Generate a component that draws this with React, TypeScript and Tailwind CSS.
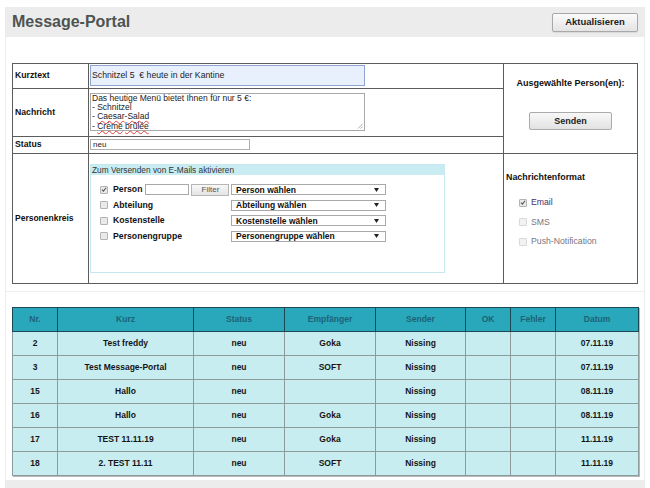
import React from "react";

function Box({ checked, faded }: { checked?: boolean; faded?: boolean }) {
  return (
    <span
      className={
        faded
          ? "inline-flex w-[8px] h-[8px] shrink-0 border border-[#d8d8d8] bg-[#f2f2f2] rounded-[1px] items-center justify-center"
          : "inline-flex w-[8px] h-[8px] shrink-0 border border-[#b4b4b4] bg-[#e9e9e9] rounded-[1px] items-center justify-center"
      }
    >
      {checked && (
        <svg width="7" height="7" viewBox="0 0 8 8">
          <path d="M1.3 4.3 L3.2 6.2 L6.8 1.6" fill="none" stroke="#555" strokeWidth="1.4" />
        </svg>
      )}
    </span>
  );
}

function Select({ label }: { label: string }) {
  return (
    <div className="w-[155px] h-[11px] border border-[#a9a9a9] bg-white flex items-center justify-between pl-[4px] pr-[6px]">
      <span className="text-[8.5px] font-bold leading-none text-[#111]">{label}</span>
      <svg width="5" height="4" viewBox="0 0 5 4">
        <path d="M0 0 H5 L2.5 4 Z" fill="#222" />
      </svg>
    </div>
  );
}

function Spell({ children }: { children: React.ReactNode }) {
  return (
    <span className="underline decoration-wavy decoration-[#e03c3c] decoration-[0.5px] underline-offset-[0.5px]">
      {children}
    </span>
  );
}

const rows = [
  ["2", "Test freddy", "neu", "Goka", "Nissing", "", "", "07.11.19"],
  ["3", "Test Message-Portal", "neu", "SOFT", "Nissing", "", "", "07.11.19"],
  ["15", "Hallo", "neu", "", "Nissing", "", "", "08.11.19"],
  ["16", "Hallo", "neu", "Goka", "Nissing", "", "", "08.11.19"],
  ["17", "TEST 11.11.19", "neu", "Goka", "Nissing", "", "", "11.11.19"],
  ["18", "2. TEST 11.11", "neu", "SOFT", "Nissing", "", "", "11.11.19"],
];

const heads = ["Nr.", "Kurz", "Status", "Empfänger", "Sender", "OK", "Fehler", "Datum"];
const widths = [45, 136, 91, 91, 90, 45, 45, 83];

export default function App() {
  return (
    <div className="w-[650px] h-[488px] bg-white font-['Liberation_Sans',Arial,sans-serif] text-[#111] flex flex-col overflow-hidden">
      <div className="pt-[7px] px-[5px] flex flex-col">
        {/* Header */}
        <header className="h-[30px] bg-[#ececec] flex items-center justify-between pl-[7px] pr-[7px]">
          <h1 className="text-[16px] font-bold text-[#4e5451] leading-none">Message-Portal</h1>
          <button className="w-[86px] h-[19px] border border-[#a8a8a8] rounded-[2px] bg-gradient-to-b from-[#fbfbfb] to-[#e4e4e4] text-[9.5px] font-bold text-[#222] leading-none shadow-[0_1px_1px_rgba(0,0,0,0.08)]">
            Aktualisieren
          </button>
        </header>

        {/* Form panel */}
        <section className="h-[255px] border-x border-b border-[#eeeeee] pt-[26px] pl-[6px]">
          <div className="w-[626px] grid grid-cols-[75px_414px_133px] grid-rows-[24px_47px_16px_129px] gap-px bg-[#5c5c5c] border border-[#5c5c5c]">
            {/* Kurztext */}
            <div className="bg-white flex items-center pl-[2px] text-[8.7px] font-bold">Kurztext</div>
            <div className="bg-white pl-px pt-px">
              <div className="w-[275px] h-[21px] bg-[#e8f0fe] border border-[#8ea6cf] flex items-center pl-[1px] text-[8.7px] text-[#222]">
                Schnitzel 5&nbsp;&nbsp;€ heute in der Kantine
              </div>
            </div>
            {/* Right column top */}
            <div className="bg-white row-span-3 flex flex-col items-center pt-[14px]">
              <div className="text-[9px] font-bold leading-[10px]">Ausgewählte Person(en):</div>
              <button className="mt-[24px] w-[83px] h-[18px] border border-[#ababab] rounded-[2px] bg-gradient-to-b from-[#f8f8f8] to-[#e2e2e2] text-[9px] font-bold text-[#222] leading-none">
                Senden
              </button>
            </div>

            {/* Nachricht */}
            <div className="bg-white flex items-center pl-[2px] text-[8.7px] font-bold">Nachricht</div>
            <div className="bg-white pl-px pt-[4px]">
              <div className="relative w-[275px] h-[38px] border border-[#a9a9a9] pl-[1px] text-[8.5px] leading-[9.2px] text-[#222]">
                <div>Das heutige Menü bietet Ihnen für nur 5 €:</div>
                <div>- Schnitzel</div>
                <div>
                  - <Spell>Caesar</Spell>-<Spell>Salad</Spell>
                </div>
                <div>
                  - <Spell>Crème</Spell> <Spell>brûlée</Spell>
                </div>
                <svg className="absolute right-[1px] bottom-[1px]" width="6" height="6" viewBox="0 0 6 6">
                  <path d="M5.5 1 L1 5.5 M5.5 3.5 L3.5 5.5" stroke="#999" strokeWidth="0.8" />
                </svg>
              </div>
            </div>

            {/* Status */}
            <div className="bg-white flex items-center pl-[2px] text-[8.7px] font-bold">Status</div>
            <div className="bg-white pl-px pt-[2px]">
              <div className="w-[160px] h-[11px] border border-[#b0b0b0] flex items-center pl-[2px] text-[8px] text-[#222] leading-none">
                neu
              </div>
            </div>

            {/* Personenkreis */}
            <div className="bg-white flex items-center pl-[2px] text-[8.5px] font-bold">Personenkreis</div>
            <div className="bg-white pl-px pt-[10px]">
              <div className="w-[355px] h-[109px] border border-[#c4eaf0] flex flex-col">
                <div className="h-[10px] bg-[#c8ecf1] flex items-center pl-[1px] text-[8.3px] text-[#333] leading-none">
                  Zum Versenden von E-Mails aktivieren
                </div>
                <div className="pt-[7px] pl-[9px] flex flex-col">
                  <div className="h-[15.5px] flex items-center">
                    <Box checked />
                    <div className="w-[118px] ml-[5px] flex items-center">
                      <span className="text-[8.7px] font-bold">Person</span>
                      <span className="ml-[3px] w-[44px] h-[11px] border border-[#a9a9a9] bg-white" />
                      <span className="ml-[2px] w-[38px] h-[12px] border border-[#b5b5b5] bg-gradient-to-b from-[#f8f8f8] to-[#e4e4e4] flex items-center justify-center text-[8px] text-[#555] leading-none">
                        Filter
                      </span>
                    </div>
                    <Select label="Person wählen" />
                  </div>
                  <div className="h-[15.5px] flex items-center">
                    <Box />
                    <div className="w-[118px] ml-[5px] text-[8.7px] font-bold">Abteilung</div>
                    <Select label="Abteilung wählen" />
                  </div>
                  <div className="h-[15.5px] flex items-center">
                    <Box />
                    <div className="w-[118px] ml-[5px] text-[8.7px] font-bold">Kostenstelle</div>
                    <Select label="Kostenstelle wählen" />
                  </div>
                  <div className="h-[15.5px] flex items-center">
                    <Box />
                    <div className="w-[118px] ml-[5px] text-[8.7px] font-bold">Personengruppe</div>
                    <Select label="Personengruppe wählen" />
                  </div>
                </div>
              </div>
            </div>
            <div className="bg-white pt-[18px] pl-[2px] flex flex-col">
              <div className="text-[8.9px] font-bold leading-[10px]">Nachrichtenformat</div>
              <div className="mt-[16px] pl-[13px] flex flex-col gap-[10px]">
                <div className="flex items-center h-[9.5px]">
                  <Box checked />
                  <span className="ml-[4px] text-[8.7px] text-[#4b2f6b]">Email</span>
                </div>
                <div className="flex items-center h-[9.5px]">
                  <Box faded />
                  <span className="ml-[4px] text-[8.7px] text-[#7a7480]">SMS</span>
                </div>
                <div className="flex items-center h-[9.5px]">
                  <Box faded />
                  <span className="ml-[4px] text-[8.7px] text-[#7a7480]">Push-Notification</span>
                </div>
              </div>
            </div>
          </div>
        </section>

        {/* Table panel */}
        <section className="h-[188px] border-x border-[#eeeeee] pt-[15px] pl-[6px]">
          <table className="w-[626px] table-fixed border-collapse shadow-[1px_1px_0_#b9b9b9]">
            <colgroup>
              {widths.map((w, i) => (
                <col key={i} style={{ width: w }} />
              ))}
            </colgroup>
            <thead>
              <tr className="h-[24px]">
                {heads.map((h) => (
                  <th
                    key={h}
                    className="bg-[#29a7bb] border border-[#1c4853] text-[8.5px] font-bold text-[#1c6377] text-center p-0"
                  >
                    {h}
                  </th>
                ))}
              </tr>
            </thead>
            <tbody>
              {rows.map((r, i) => (
                <tr key={i} className="h-[24px]">
                  {r.map((c, j) => (
                    <td
                      key={j}
                      className="bg-[#c8edf1] border border-[#8d9b9d] text-[8.5px] font-bold text-[#151515] text-center p-0"
                    >
                      {c}
                    </td>
                  ))}
                </tr>
              ))}
            </tbody>
          </table>
        </section>
      </div>
      <div className="mx-[5px] h-[8px] bg-[#ececec]" />
    </div>
  );
}
